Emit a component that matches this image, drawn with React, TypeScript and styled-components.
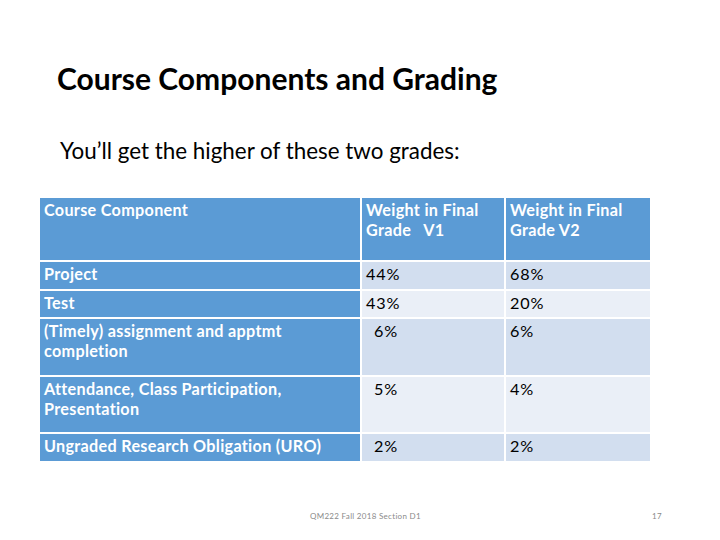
import React from "react";
import styled, { createGlobalStyle } from "styled-components";

const Global = createGlobalStyle`
  html, body { margin: 0; padding: 0; background: #ffffff; }
  body { font-family: Lato, "Open Sans", sans-serif; }
`;

const Slide = styled.div`
  width: 720px;
  height: 540px;
  background: #ffffff;
  display: flex;
  flex-direction: column;
  box-sizing: border-box;
  padding-top: 58px;
`;

const Title = styled.h1`
  margin: 0 0 0 57px;
  font-family: Lato, sans-serif;
  font-weight: 700;
  font-size: 30px;
  line-height: 40px;
  color: #000;
  letter-spacing: 0px;
`;

const Subtitle = styled.p`
  margin: 38px 0 0 60px;
  font-family: Lato, sans-serif;
  font-size: 22.4px;
  line-height: 30px;
  color: #000;
`;

const Table = styled.div`
  margin: 32px 0 0 40px;
  width: 610px;
  display: grid;
  grid-template-columns: 320px 142px 144px;
  grid-template-rows: 62px 27px 26px 56px 55px 27px;
  gap: 2px;
`;

const Cell = styled.div<{ $tone: "blue" | "dark" | "light"; $indent?: number }>`
  background: ${(p) => (p.$tone === "blue" ? "#5b9bd5" : p.$tone === "dark" ? "#d2deef" : "#eaeff7")};
  color: ${(p) => (p.$tone === "blue" ? "#ffffff" : "#000000")};
  font-family: Lato, sans-serif;
  font-weight: ${(p) => (p.$tone === "blue" ? 700 : 400)};
  font-size: 16.2px;
  line-height: 20px;
  letter-spacing: ${(p) => (p.$tone === "blue" ? "0.3px" : "0.8px")};
  padding: 2px 4px 0 ${(p) => 4 + (p.$indent ?? 0)}px;
  box-sizing: border-box;
  white-space: pre-wrap;
`;

const Footer = styled.div`
  margin-top: auto;
  height: 29px;
  display: flex;
  align-items: flex-start;
  font-family: Lato, sans-serif;
  font-size: 8px;
  color: #8a8a8a;
  letter-spacing: 0.3px;
`;

const FooterCenter = styled.span`
  margin-left: 310px;
`;

const PageNum = styled.span`
  margin-left: auto;
  margin-right: 58px;
`;

type Row = { name: string; v1: string; v2: string; indent?: boolean };

const rows: Row[] = [
  { name: "Project", v1: "44%", v2: "68%" },
  { name: "Test", v1: "43%", v2: "20%" },
  { name: "(Timely) assignment and apptmt\ncompletion", v1: "6%", v2: "6%", indent: true },
  { name: "Attendance, Class Participation,\nPresentation", v1: "5%", v2: "4%", indent: true },
  { name: "Ungraded Research Obligation (URO)", v1: "2%", v2: "2%", indent: true },
];

export default function App() {
  return (
    <>
      <Global />
      <Slide>
        <Title>Course Components and Grading</Title>
        <Subtitle>You’ll get the higher of these two grades:</Subtitle>
        <Table>
          <Cell $tone="blue">Course Component</Cell>
          <Cell $tone="blue">{"Weight in Final\nGrade   V1"}</Cell>
          <Cell $tone="blue">{"Weight in Final\nGrade V2"}</Cell>
          {rows.map((r, i) => {
            const tone = i % 2 === 0 ? "dark" : "light";
            return (
              <React.Fragment key={r.name}>
                <Cell $tone="blue">{r.name}</Cell>
                <Cell $tone={tone} $indent={r.indent ? 8 : 0}>{r.v1}</Cell>
                <Cell $tone={tone}>{r.v2}</Cell>
              </React.Fragment>
            );
          })}
        </Table>
        <Footer>
          <FooterCenter>QM222 Fall 2018 Section D1</FooterCenter>
          <PageNum>17</PageNum>
        </Footer>
      </Slide>
    </>
  );
}
